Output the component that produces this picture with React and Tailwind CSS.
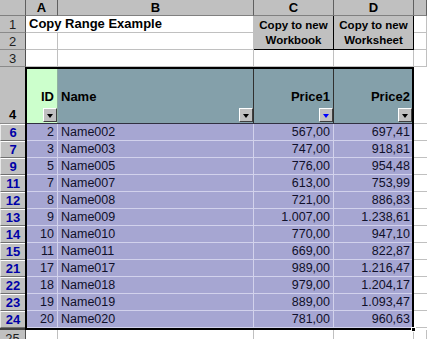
import React from 'react';

const rows = [
  [6, 2, 'Name002', '567,00', '697,41'],
  [7, 3, 'Name003', '747,00', '918,81'],
  [9, 5, 'Name005', '776,00', '954,48'],
  [11, 7, 'Name007', '613,00', '753,99'],
  [12, 8, 'Name008', '721,00', '886,83'],
  [13, 9, 'Name009', '1.007,00', '1.238,61'],
  [14, 10, 'Name010', '770,00', '947,10'],
  [15, 11, 'Name011', '669,00', '822,87'],
  [21, 17, 'Name017', '989,00', '1.216,47'],
  [22, 18, 'Name018', '979,00', '1.204,17'],
  [23, 19, 'Name019', '889,00', '1.093,47'],
  [24, 20, 'Name020', '781,00', '960,63'],
];

const DropButton = ({ blue }) => (
  <div className="flex h-[14px] w-[14px] items-end justify-center border border-t-white border-l-white border-r-[#404040] border-b-[#404040] bg-[#c0c0c0] pb-[3px]">
    <div
      className={`h-0 w-0 border-x-[3.5px] border-t-[4px] border-x-transparent ${
        blue ? 'border-t-[#0000ff]' : 'border-t-black'
      }`}
    />
  </div>
);

const HeadCell = ({ label, align, bg, border, blue }) => (
  <div className={`flex flex-col justify-end pb-[1px] ${bg} ${border}`}>
    <div className={`mb-[4px] text-[13px] font-bold leading-[15px] ${align}`}>{label}</div>
    <div className="flex justify-end">
      <DropButton blue={blue} />
    </div>
  </div>
);

const ColHead = ({ children }) => (
  <div className="flex items-center justify-center border-r border-b border-r-[#606060] border-b-[#808080] bg-[#c0c0c0] text-[13px] font-bold leading-none">
    {children}
  </div>
);

const RowHead = ({ children, bold }) => (
  <div
    className={`flex items-center justify-center border-r border-b border-r-[#505050] border-b-[#8a8a8a] bg-[#c0c0c0] text-[13px] leading-none text-[#202020] ${
      bold ? 'font-bold' : ''
    }`}
  >
    {children}
  </div>
);

const Grid = ({ className = '' }) => (
  <div className={`border-r border-b border-[#c0c0c0] ${className}`} />
);

export default function App() {
  return (
    <div className="h-[339px] w-[427px] overflow-hidden bg-white font-['Liberation_Sans',Arial,sans-serif] text-black">
      {/* column headers and rows 1-3 */}
      <div className="grid grid-cols-[26px_32px_196px_80px_80px_1fr] grid-rows-[16px_17px_17px_17px]">
        <div className="border-r border-b border-r-[#606060] border-b-[#808080] bg-[#c0c0c0]" />
        <ColHead>A</ColHead>
        <ColHead>B</ColHead>
        <ColHead>C</ColHead>
        <ColHead>D</ColHead>
        <ColHead />

        <RowHead>1</RowHead>
        <div className="flex items-center border-b border-[#c0c0c0] pl-[3px] text-[13px] font-bold whitespace-nowrap">
          Copy Range Example
        </div>
        <Grid />
        <div className="row-span-2 flex flex-col items-center justify-center border-r border-b border-black bg-[#c0c0c0] text-[11.5px] font-bold leading-[15px]">
          <span>Copy to new</span>
          <span>Workbook</span>
        </div>
        <div className="row-span-2 flex flex-col items-center justify-center border-r border-b border-black bg-[#c0c0c0] text-[11.5px] font-bold leading-[15px]">
          <span>Copy to new</span>
          <span>Worksheet</span>
        </div>
        <Grid />

        <RowHead>2</RowHead>
        <Grid />
        <Grid />
        <Grid />

        <RowHead>3</RowHead>
        <Grid />
        <Grid />
        <Grid />
        <Grid />
        <Grid />
      </div>

      {/* filtered table block */}
      <div className="flex">
        <div className="flex w-[25px] flex-col">
          <div className="flex h-[57px] items-end justify-center border-b border-[#8a8a8a] bg-[#c0c0c0] pb-[2px] text-[13px] font-bold leading-none">
            4
          </div>
          {rows.map((r) => (
            <div
              key={r[0]}
              className="flex h-[17px] items-center justify-center border-t border-l border-b border-t-white border-l-[#e8e8e8] border-b-[#707070] bg-[#c0c0c0] text-[13px] font-bold leading-none text-[#0000a8]"
            >
              {r[0]}
            </div>
          ))}
          <div className="h-[2px] bg-[#404040]" />
        </div>

        <div className="relative w-[389px] border-2 border-black">
          <div className="grid h-[55px] grid-cols-[31px_196px_80px_78px] border-b border-[#303040]">
            <HeadCell label="ID" align="text-right pr-[3px]" bg="bg-[#ccffcc]" border="border-r border-[#8fb0a0]" />
            <HeadCell label="Name" align="text-left pl-[3px]" bg="bg-[#84a0aa]" border="border-r border-[#303030]" />
            <HeadCell label="Price1" align="text-right pr-[3px]" bg="bg-[#84a0aa]" border="border-r border-[#303030]" blue />
            <HeadCell label="Price2" align="text-right pr-[2px]" bg="bg-[#84a0aa]" border="" />
          </div>
          {rows.map((r) => (
            <div
              key={r[0]}
              className="grid h-[17px] grid-cols-[31px_196px_80px_78px] border-b border-[#d2d2ec] bg-[#a6a6d2] text-[12.5px] leading-none text-[#10102a]"
            >
              <div className="flex items-center justify-end border-r border-[#d2d2ec] pr-[3px]">{r[1]}</div>
              <div className="flex items-center border-r border-[#d2d2ec] pl-[3px]">{r[2]}</div>
              <div className="flex items-center justify-end border-r border-[#d2d2ec] pr-[3px]">{r[3]}</div>
              <div className="flex items-center justify-end pr-[2px]">{r[4]}</div>
            </div>
          ))}
          <div className="absolute -right-[4px] -bottom-[4px] h-[5px] w-[5px] border border-white bg-black" />
        </div>

        <div className="flex flex-1 flex-col">
          <div className="h-[57px] border-b border-[#c0c0c0]" />
          {rows.map((r) => (
            <div key={r[0]} className="h-[17px] border-b border-[#c0c0c0]" />
          ))}
        </div>
      </div>

      {/* row 25 */}
      <div className="grid h-[17px] grid-cols-[26px_32px_196px_80px_80px_1fr]">
        <RowHead>25</RowHead>
        <Grid />
        <Grid />
        <Grid />
        <Grid />
        <Grid />
      </div>
    </div>
  );
}
